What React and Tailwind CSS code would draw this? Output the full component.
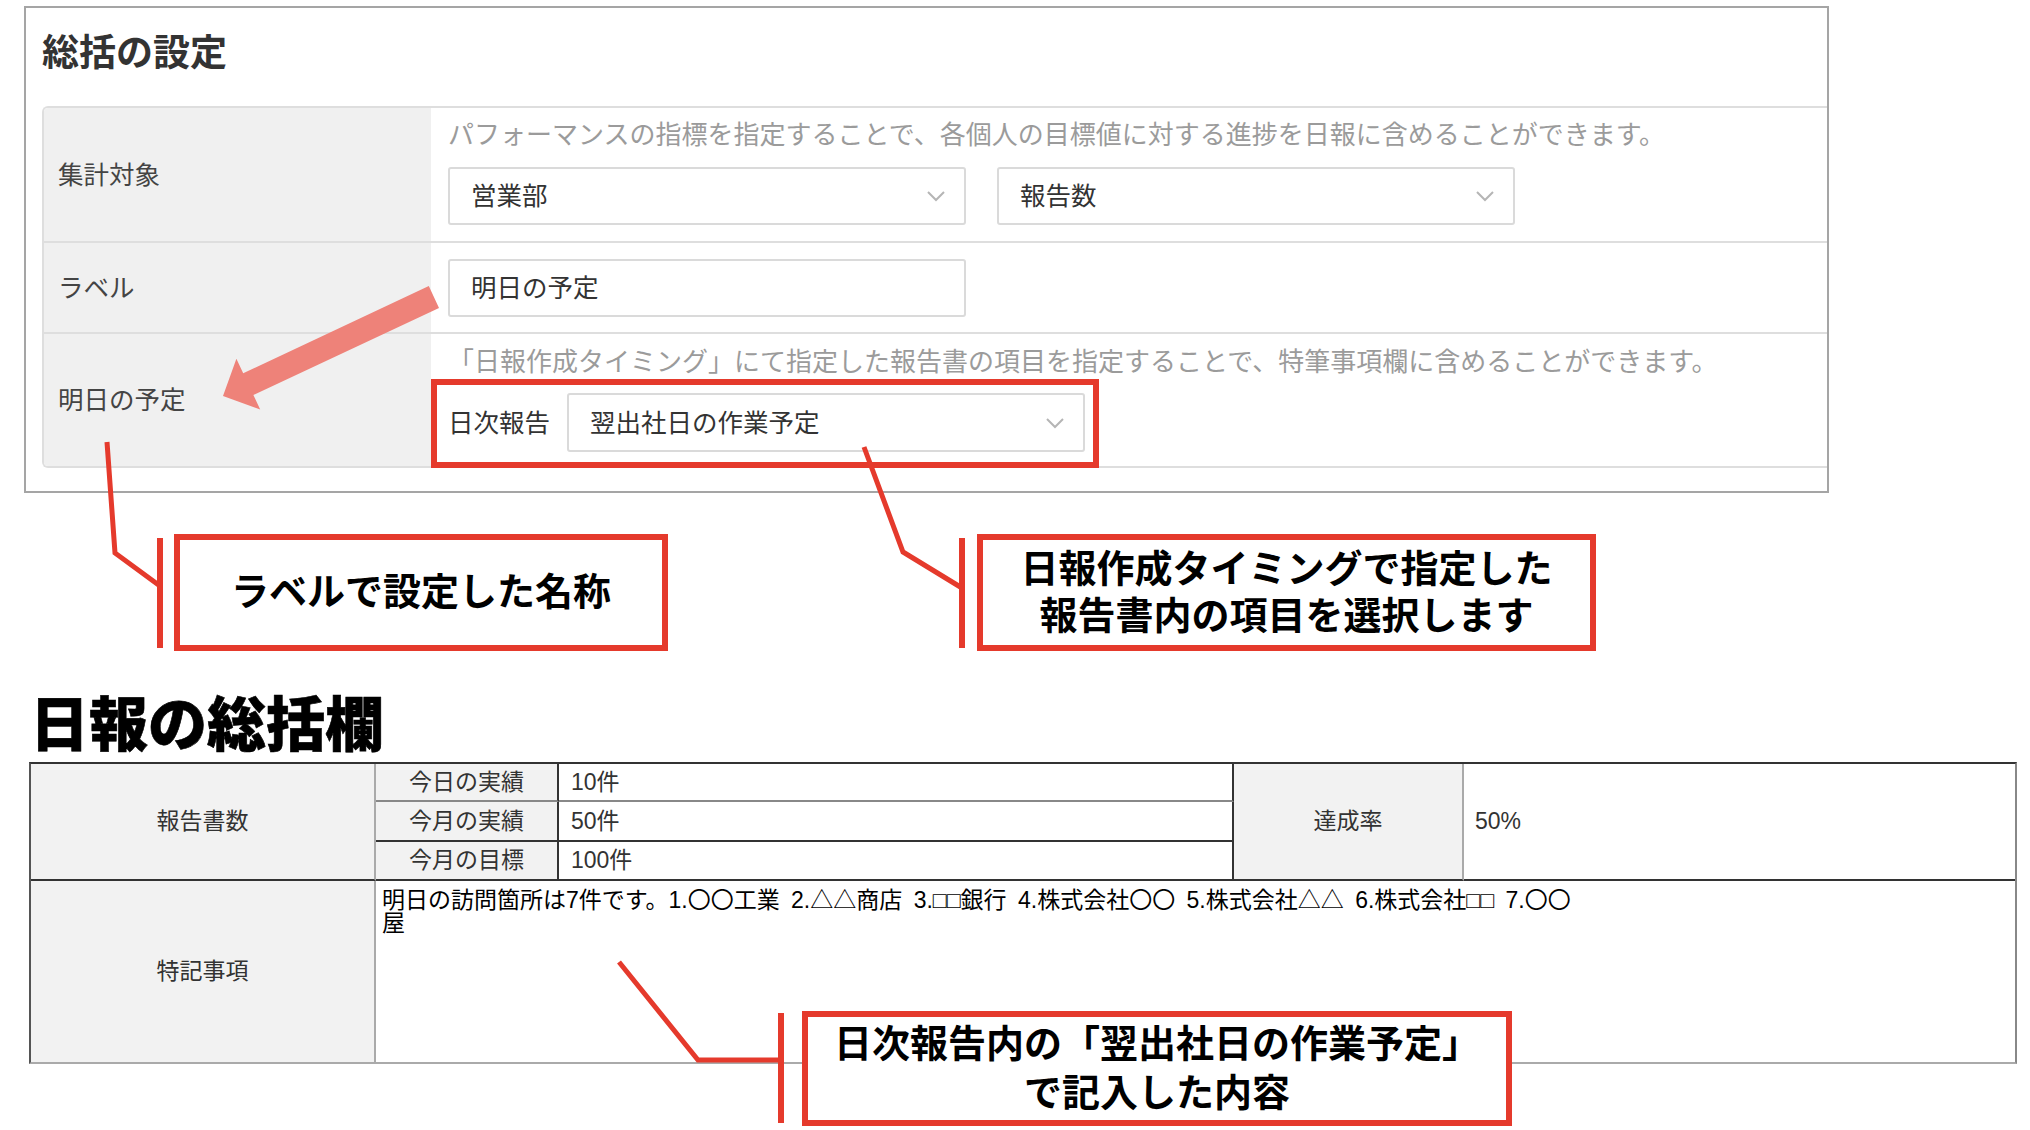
import React from "react";

const RED = "#e53a2c";

function Chevron() {
  return (
    <svg width="20" height="12" viewBox="0 0 20 12" fill="none">
      <polyline points="2,2 10,10 18,2" stroke="#b5b5b5" strokeWidth="2" />
    </svg>
  );
}

function Select({ value, h = "h-[58px]" }) {
  return (
    <div className={`flex ${h} w-[518px] items-center justify-between rounded-[3px] border-2 border-[#dadada] bg-white pl-[21px] pr-[18px] text-[#333]`}>
      <span>{value}</span>
      <Chevron />
    </div>
  );
}

function Callout({ lines, className }) {
  return (
    <div className={`flex flex-col items-center justify-center border-[6px] border-[#e53a2c] bg-white text-[38px] font-bold text-black ${className}`}>
      {lines.map((l) => (
        <div key={l}>{l}</div>
      ))}
    </div>
  );
}

export default function App() {
  return (
    <div className="relative h-[1130px] w-[2030px] overflow-hidden bg-white font-['Liberation_Sans','Noto_Sans_CJK_JP',sans-serif] text-[#333]">
      {/* ===== 総括の設定 panel ===== */}
      <section className="ml-[24px] mt-[6px] flex h-[487px] w-[1805px] flex-col border-2 border-[#a5a5a5] bg-white pt-[26px]">
        <h2 className="ml-[16px] text-[37px] font-bold leading-[40px] text-[#333]">総括の設定</h2>

        <div className="ml-[16px] mt-[32px] rounded-l-[6px] border-2 border-r-0 border-[#dedede] text-[25.5px] leading-[30px]">
          {/* 集計対象 */}
          <div className="grid h-[135px] grid-cols-[387px_1fr] border-b-2 border-[#dedede]">
            <div className="flex items-center rounded-tl-[4px] bg-[#f0f0f0] pl-[14px] text-[#444]">集計対象</div>
            <div className="flex flex-col pl-[17px] pt-[12px]">
              <p className="whitespace-nowrap text-[26px] text-[#9b9b9b]">
                パフォーマンスの指標を指定することで、各個人の目標値に対する進捗を日報に含めることができます。
              </p>
              <div className="mt-[17px] flex gap-[31px]">
                <Select value="営業部" />
                <Select value="報告数" />
              </div>
            </div>
          </div>

          {/* ラベル */}
          <div className="grid h-[91px] grid-cols-[387px_1fr] border-b-2 border-[#dedede]">
            <div className="flex items-center bg-[#f0f0f0] pl-[14px] text-[#444]">ラベル</div>
            <div className="flex items-center pl-[17px]">
              <div className="flex h-[58px] w-[518px] items-center rounded-[3px] border-2 border-[#dadada] bg-white pl-[21px]">
                明日の予定
              </div>
            </div>
          </div>

          {/* 明日の予定 */}
          <div className="grid h-[132px] grid-cols-[387px_1fr]">
            <div className="flex items-center rounded-bl-[4px] bg-[#f0f0f0] pl-[14px] text-[#444]">明日の予定</div>
            <div className="flex flex-col pl-[17px] pt-[13px]">
              <p className="whitespace-nowrap text-[26px] text-[#9b9b9b]">
                「日報作成タイミング」にて指定した報告書の項目を指定することで、特筆事項欄に含めることができます。
              </p>
              <div className="mt-[16px] flex items-center gap-[17px]">
                <span className="text-[#333]">日次報告</span>
                <Select value="翌出社日の作業予定" h="h-[59px]" />
              </div>
            </div>
          </div>
        </div>
      </section>

      {/* ===== callouts ===== */}
      <div className="mt-[41px] flex h-[117px]">
        <Callout className="ml-[174px] w-[494px] leading-[47px]" lines={["ラベルで設定した名称"]} />
        <Callout
          className="ml-[309px] w-[619px] leading-[47px]"
          lines={["日報作成タイミングで指定した", "報告書内の項目を選択します"]}
        />
      </div>

      {/* ===== 日報の総括欄 ===== */}
      <h1 className="ml-[30px] mt-[43px] text-[59px] font-black leading-[64px] text-black [-webkit-text-stroke:0.6px_black]">
        日報の総括欄
      </h1>

      <div className="ml-[29px] mt-[4px] grid w-[1988px] grid-cols-[345px_183px_675px_230px_1fr] grid-rows-[38px_40px_39px_181px] border-t-2 border-r-2 border-b-2 border-l-2 border-t-[#333] border-r-[#888] border-b-[#aaa] border-l-[#555] text-[23px] text-[#333]">
        <div className="row-span-3 flex items-center justify-center border-r-2 border-b-2 border-r-[#aaa] border-b-[#333] bg-[#f2f2f2]">
          報告書数
        </div>
        <div className="flex items-center justify-center border-r-2 border-b-2 border-r-[#333] border-b-[#888] bg-[#f2f2f2]">今日の実績</div>
        <div className="flex items-center border-r-2 border-b-2 border-r-[#333] border-b-[#888] pl-[12px]">10件</div>
        <div className="row-span-3 flex items-center justify-center border-r-2 border-b-2 border-r-[#aaa] border-b-[#333] bg-[#f2f2f2]">
          達成率
        </div>
        <div className="row-span-3 flex items-center border-b-2 border-b-[#333] pl-[11px]">50%</div>

        <div className="flex items-center justify-center border-r-2 border-b-2 border-r-[#333] border-b-[#333] bg-[#f2f2f2]">今月の実績</div>
        <div className="flex items-center border-r-2 border-b-2 border-r-[#333] border-b-[#333] pl-[12px]">50件</div>

        <div className="flex items-center justify-center border-r-2 border-b-2 border-r-[#333] border-b-[#333] bg-[#f2f2f2]">今月の目標</div>
        <div className="flex items-center border-r-2 border-b-2 border-r-[#333] border-b-[#333] pl-[12px]">100件</div>

        <div className="flex items-center justify-center border-r-2 border-r-[#aaa] bg-[#f2f2f2]">特記事項</div>
        <div className="col-span-4 pl-[6px] pt-[8px] text-[23px] leading-[23px] text-black [word-spacing:5px]">
          明日の訪問箇所は7件です。1.〇〇工業 2.△△商店 3.□□銀行 4.株式会社〇〇 5.株式会社△△ 6.株式会社□□ 7.〇〇
          <br />屋
        </div>
      </div>

      {/* callout over the table */}
      <Callout
        className="absolute left-[802px] top-[1011px] h-[115px] w-[710px] leading-[49px]"
        lines={["日次報告内の「翌出社日の作業予定」", "で記入した内容"]}
      />

      {/* ===== annotation strokes ===== */}
      <svg className="pointer-events-none absolute left-0 top-0" width="2030" height="1130" viewBox="0 0 2030 1130">
        <polygon
          points="223,396 236.4,358.8 243.2,373.2 428.8,286.1 439,307.9 253.4,395 260.2,409.4"
          fill="#ee8279"
        />
        <rect x="434" y="382" width="662" height="83" fill="none" stroke={RED} strokeWidth="6" />

        <polyline points="107,442 115,553 160,586" fill="none" stroke={RED} strokeWidth="5" />
        <rect x="157" y="538" width="6" height="110" fill={RED} />

        <polyline points="864,447 903,552 962,588" fill="none" stroke={RED} strokeWidth="5" />
        <rect x="959" y="538" width="6" height="110" fill={RED} />

        <polyline points="619,962 698,1060 781,1060" fill="none" stroke={RED} strokeWidth="5" />
        <rect x="778" y="1013" width="6" height="110" fill={RED} />
      </svg>
    </div>
  );
}
